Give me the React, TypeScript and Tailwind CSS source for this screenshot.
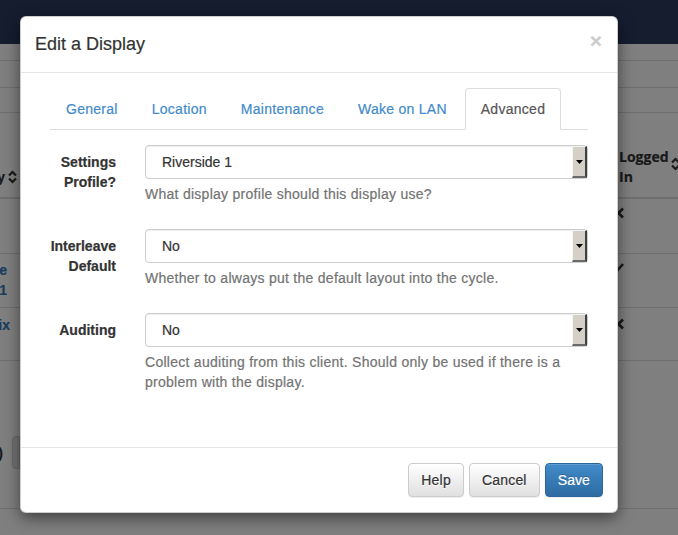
import React from "react";

function SortIcon({ className = "" }: { className?: string }) {
  return (
    <svg width="9" height="14" viewBox="0 0 9 14" className={className}>
      <path d="M1 5.5 L4.5 2 L8 5.5 M1 8.5 L4.5 12 L8 8.5" fill="none" stroke="#333" strokeWidth="2.2" />
    </svg>
  );
}

function XIcon() {
  return (
    <svg width="13" height="12" viewBox="0 0 13 12">
      <path d="M2 1.5 L11 10.5 M11 1.5 L2 10.5" fill="none" stroke="#333" strokeWidth="2.6" />
    </svg>
  );
}

function CheckIcon() {
  return (
    <svg width="14" height="13" viewBox="0 0 14 13">
      <path d="M1 7 L5 11 L13 2" fill="none" stroke="#333" strokeWidth="2.6" />
    </svg>
  );
}

function SelectBox({ value }: { value: string }) {
  return (
    <div className="flex h-[34px] items-stretch rounded-[4px] border border-[#ccc] bg-white shadow-[inset_0_1px_1px_rgba(0,0,0,0.075)]">
      <div className="flex flex-1 items-center pl-[16px] text-[#333]">{value}</div>
      <div className="flex w-[15px] items-center justify-center border-t border-l border-t-[#f4f4f4] border-l-[#f4f4f4] border-r-2 border-b-2 border-r-[#404040] border-b-[#6a6a6a] bg-[#d4d0c8]">
        <svg width="7" height="4" viewBox="0 0 7 4">
          <polygon points="0,0 7,0 3.5,4" fill="#000" />
        </svg>
      </div>
    </div>
  );
}

function FormRow({ label, value, help }: { label: React.ReactNode; value: string; help: React.ReactNode }) {
  return (
    <div className="mb-[15px] flex gap-[29px]">
      <div className="w-[66px] shrink-0 whitespace-nowrap pt-[7px] text-right font-bold leading-5 text-[#333]">{label}</div>
      <div className="flex-1">
        <SelectBox value={value} />
        <div className="mt-[5px] mb-[10px] leading-5 tracking-[0.27px] text-[#737373]">{help}</div>
      </div>
    </div>
  );
}

function Btn({ children, primary = false }: { children: React.ReactNode; primary?: boolean }) {
  return primary ? (
    <button className="h-[34px] rounded-[4px] border border-[#2b669a] bg-gradient-to-b from-[#428bca] to-[#2d6ca2] px-[12px] leading-5 tracking-[0.1px] text-white [text-shadow:0_-1px_0_rgba(0,0,0,0.2)] shadow-[inset_0_1px_0_rgba(255,255,255,0.15),0_1px_1px_rgba(0,0,0,0.075)]">
      {children}
    </button>
  ) : (
    <button className="h-[34px] rounded-[4px] border border-[#ccc] bg-gradient-to-b from-white to-[#e0e0e0] px-[12px] leading-5 tracking-[0.2px] text-[#333] [text-shadow:0_1px_0_#fff] shadow-[inset_0_1px_0_rgba(255,255,255,0.15),0_1px_1px_rgba(0,0,0,0.075)]">
      {children}
    </button>
  );
}

export default function App() {
  const tabs = ["General", "Location", "Maintenance", "Wake on LAN", "Advanced"];
  return (
    <div className="relative h-[535px] w-[678px] overflow-hidden bg-white font-['Liberation_Sans',Arial,sans-serif] text-[14px] leading-5 text-[#333] [-webkit-text-stroke:0.2px]">
      {/* background page */}
      <div className="flex flex-col">
        <div className="h-[44px] bg-[#2b3a5e]" />
        <div className="h-[17px] border-b border-[#ddd]" />
        <div className="h-[27px] border-b border-[#ddd]" />
        <div className="h-[25px] border-b border-[#ddd]" />
        <div className="h-[21px]" />
        {/* table header */}
        <div className="flex h-[65px] items-end justify-between border-b-2 border-[#ddd] pb-[10px]">
          <div className="flex w-[20px] justify-end overflow-hidden">
            <div className="flex shrink-0 items-center whitespace-nowrap pr-[3px] font-bold">
              Display
              <SortIcon className="ml-[3px]" />
            </div>
          </div>
          <div className="flex w-[80px] shrink-0 items-start pl-[21px]">
            <div className="w-[51px] font-['Open_Sans',sans-serif] font-bold leading-5">Logged In</div>
            <SortIcon className="ml-[2px] mt-[10px] shrink-0" />
          </div>
        </div>
        {/* row 1 */}
        <div className="flex h-[55px] items-start justify-between border-b border-[#ddd]">
          <div className="w-[20px]" />
          <div className="w-[80px] shrink-0 pl-[14px] pt-[8px]">
            <XIcon />
          </div>
        </div>
        {/* row 2 */}
        <div className="flex h-[54px] items-start justify-between border-b border-[#ddd]">
          <div className="flex w-[20px] justify-end overflow-hidden pt-[6px]">
            <div className="shrink-0 whitespace-nowrap pr-[13px] text-right font-bold text-[#337ab7]">
              <div>Riverside</div>
              <div>Display 1</div>
            </div>
          </div>
          <div className="w-[80px] shrink-0 pl-[12px] pt-[8px]">
            <CheckIcon />
          </div>
        </div>
        {/* row 3 */}
        <div className="flex h-[53px] items-start justify-between border-b border-[#ddd]">
          <div className="flex w-[20px] justify-end overflow-hidden pt-[7px]">
            <div className="shrink-0 whitespace-nowrap pr-[10px] text-right font-bold text-[#337ab7]">Matrix</div>
          </div>
          <div className="w-[80px] shrink-0 pl-[14px] pt-[10px]">
            <XIcon />
          </div>
        </div>
        <div className="h-[75px]" />
        {/* pagination */}
        <div className="flex h-[33px] items-stretch">
          <div className="flex w-[20px] items-stretch justify-end overflow-hidden">
            <div className="flex shrink-0 items-center whitespace-nowrap font-bold">(10)</div>
            <div className="ml-[9px] w-[8px] shrink-0 rounded-l-[4px] border border-[#ccc] bg-[#e6e6e6]" />
          </div>
        </div>
        <div className="h-[40px] border-b border-[#ddd]" />
      </div>

      {/* overlay */}
      <div className="absolute inset-0 bg-black/50" />

      {/* modal */}
      <div className="absolute left-[20px] top-[16px] w-[598px] rounded-[6px] border border-black/20 bg-white shadow-[0_5px_15px_rgba(0,0,0,0.5)]">
        <div className="flex items-start justify-between border-b border-[#e5e5e5] py-[15px] pl-[14px] pr-[15px]">
          <h4 className="text-[18px] leading-[25px] text-[#333]">Edit a Display</h4>
          <button className="mt-[-2px] text-[21px] font-bold leading-none text-black opacity-20">×</button>
        </div>
        <div className="px-[29px] pt-[15px] pb-[30px]">
          <ul className="flex border-b border-[#ddd]">
            {tabs.map((t) =>
              t === "Advanced" ? (
                <li key={t} className="-mb-px mr-[2px]">
                  <span className="block rounded-t-[4px] border border-[#ddd] border-b-transparent bg-white px-[15px] py-[10px] leading-5 tracking-[0.27px] text-[#555]">
                    {t}
                  </span>
                </li>
              ) : (
                <li key={t} className="-mb-px mr-[2px]">
                  <span className="block rounded-t-[4px] border border-transparent px-[15px] py-[10px] leading-5 tracking-[0.27px] text-[#428bca]">
                    {t}
                  </span>
                </li>
              )
            )}
          </ul>
          <div className="pt-[15px]">
            <FormRow
              label={
                <>
                  Settings
                  <br />
                  Profile?
                </>
              }
              value="Riverside 1"
              help="What display profile should this display use?"
            />
            <FormRow
              label={
                <>
                  Interleave
                  <br />
                  Default
                </>
              }
              value="No"
              help="Whether to always put the default layout into the cycle."
            />
            <FormRow
              label="Auditing"
              value="No"
              help="Collect auditing from this client. Should only be used if there is a problem with the display."
            />
          </div>
        </div>
        <div className="flex justify-end gap-[5px] border-t border-[#e5e5e5] py-[15px] pl-[15px] pr-[14px]">
          <Btn>Help</Btn>
          <Btn>Cancel</Btn>
          <Btn primary>Save</Btn>
        </div>
      </div>
    </div>
  );
}
